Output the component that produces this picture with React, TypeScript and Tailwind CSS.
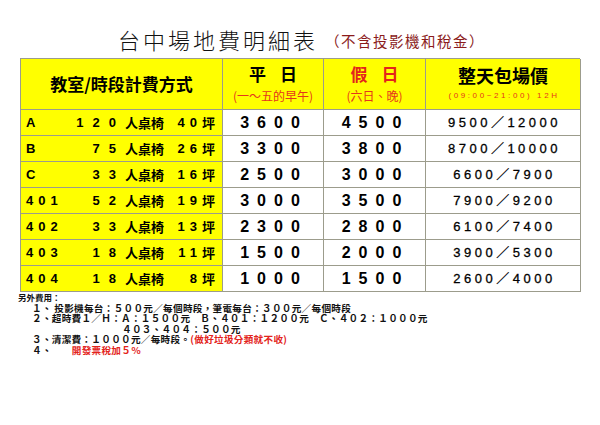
const cjk = "font-['Noto_Sans_CJK_TC',sans-serif]";
const arial = "font-['Liberation_Sans','Noto_Sans_CJK_TC',sans-serif]";

type Row = {
  label: string;
  seats: string;
  area: string;
  weekday: string;
  holiday: string;
  full: [string, string];
};

const rows: Row[] = [
  { label: "A", seats: "120", area: "40", weekday: "3600", holiday: "4500", full: ["9500", "12000"] },
  { label: "B", seats: "75", area: "26", weekday: "3300", holiday: "3800", full: ["8700", "10000"] },
  { label: "C", seats: "33", area: "16", weekday: "2500", holiday: "3000", full: ["6600", "7900"] },
  { label: "401", seats: "52", area: "19", weekday: "3000", holiday: "3500", full: ["7900", "9200"] },
  { label: "402", seats: "33", area: "13", weekday: "2300", holiday: "2800", full: ["6100", "7400"] },
  { label: "403", seats: "18", area: "11", weekday: "1500", holiday: "2000", full: ["3900", "5300"] },
  { label: "404", seats: "18", area: "8", weekday: "1000", holiday: "1500", full: ["2600", "4000"] },
];

const cell = "border-r border-b border-[#9c9c8c]";

function RoomCell({ row }: { row: Row }) {
  return (
    <div className={`${cell} flex h-[26px] items-center bg-[#ffff00] pl-[5px] pr-[7px] text-black`}>
      <span className={`${arial} w-[40px] text-[13px] font-bold tracking-[5px]`}>{row.label}</span>
      <span className="flex w-[98px] items-center justify-end">
        <span className={`${arial} text-[13px] font-bold tracking-[9px]`}>{row.seats}</span>
        <span className={`${cjk} text-[13px] font-bold`}>人桌椅</span>
      </span>
      <span className="flex flex-1 items-center justify-end">
        <span className={`${arial} text-[13px] font-bold tracking-[5px]`}>{row.area}</span>
        <span className={`${cjk} text-[13px] font-bold`}>坪</span>
      </span>
    </div>
  );
}

function Price({ value }: { value: string }) {
  return (
    <div className={`${cell} flex h-[26px] items-center justify-center bg-white`}>
      <span className={`${arial} pl-[2px] text-[16px] font-bold tracking-[8px] text-black`}>{value}</span>
    </div>
  );
}

function FullDay({ value }: { value: [string, string] }) {
  return (
    <div className={`${cell} flex h-[26px] items-center justify-center bg-white`}>
      <span className={`${arial} pl-[3px] text-[13px] tracking-[3.5px] text-black [-webkit-text-stroke:0.3px_black]`}>
        {value[0]}
        <span className={cjk}>／</span>
        {value[1]}
      </span>
    </div>
  );
}

export default function App() {
  return (
    <div className="h-[425px] w-[600px] bg-white">
      <div className="flex items-end pl-[118px] pt-[25px]">
        <h1 className={`${cjk} text-[22px] font-light leading-[28px] tracking-[3px] text-[#111]`}>台中場地費明細表</h1>
        <span className={`${cjk} ml-[7px] pb-[2px] text-[14.5px] leading-[20px] tracking-[1.5px] text-[#8b1c1c]`}>（不含投影機和稅金）</span>
      </div>

      <div className="ml-[20px] mt-[5px] grid w-[560px] grid-cols-[202px_101px_102px_155px] border-l border-t border-[#9c9c8c]">
        <div className={`${cell} flex h-[51px] items-center justify-center bg-[#ffff00]`}>
          <span className={`${cjk} text-[17px] font-bold text-black`}>教室/時段計費方式</span>
        </div>
        <div className={`${cell} flex h-[51px] flex-col items-center bg-[#ffff00] pt-[3px]`}>
          <span className={`${cjk} text-[17px] font-bold leading-[24px] tracking-[14px] pl-[14px] text-black`}>平日</span>
          <span className={`${cjk} mt-[2px] text-[12px] leading-[16px] text-[#e5361c]`}>(一～五的早午)</span>
        </div>
        <div className={`${cell} flex h-[51px] flex-col items-center bg-[#ffff00] pt-[3px]`}>
          <span className={`${cjk} text-[17px] font-bold leading-[24px] tracking-[14px] pl-[14px] text-[#e3241b]`}>假日</span>
          <span className={`${cjk} mt-[2px] text-[12px] leading-[16px] text-[#e5361c]`}>(六日、晚)</span>
        </div>
        <div className={`${cell} flex h-[51px] flex-col items-center bg-[#ffff00] pt-[3px]`}>
          <span className={`${cjk} text-[18px] font-bold leading-[26px] text-black`}>整天包場價</span>
          <span className={`${arial} mt-[1px] pl-[2px] text-[8px] leading-[14px] tracking-[2.6px] text-[#e5361c]`}>(09:00~21:00) 12H</span>
        </div>

        {rows.map((row) => (
          <div key={row.label} className="contents">
            <RoomCell row={row} />
            <Price value={row.weekday} />
            <Price value={row.holiday} />
            <FullDay value={row.full} />
          </div>
        ))}
      </div>

      <div className={`${cjk} pl-[18px] text-[9.6px] font-bold leading-[10.5px] text-[#111]`}>
        <div className="text-[8.5px]">另外費用：</div>
        <div className="pl-[14px] tracking-[0.3px]">
          <div>１、&nbsp;投影機每台：５００元／每個時段，筆電每台：３００元／每個時段</div>
          <div>２、超時費１／Ｈ：Ａ：１５００元　Ｂ、４０１：１２００元　Ｃ、４０２：１０００元</div>
          <div className="pl-[90px]">４０３、４０４：５００元</div>
          <div>
            ３、清潔費：１０００元／每時段。<span className="text-[#e3241b]">(做好垃圾分類就不收)</span>
          </div>
          <div>
            ４、<span className="pl-[20px] text-[#e3241b]">開發票稅加５％</span>
          </div>
        </div>
      </div>
    </div>
  );
}
